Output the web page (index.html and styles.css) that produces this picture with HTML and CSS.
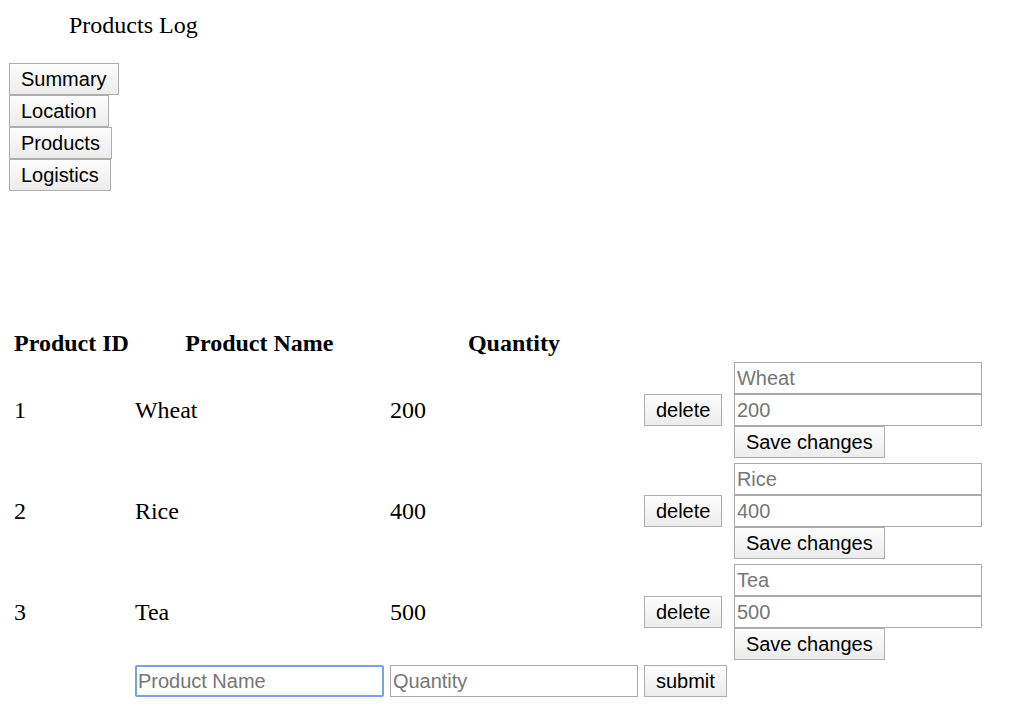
FILE: index.html
```html
<!DOCTYPE html>
<html>
<head>
<meta charset="utf-8">
<title>Products Log</title>
<link rel="stylesheet" href="styles.css">
</head>
<body>
<div class="title">Products Log</div>
<nav class="nav">
  <button class="btn">Summary</button>
  <button class="btn">Location</button>
  <button class="btn">Products</button>
  <button class="btn">Logistics</button>
</nav>
<table class="products">
  <thead>
    <tr>
      <th class="c-id">Product ID</th>
      <th class="c-name">Product Name</th>
      <th class="c-qty">Quantity</th>
      <th class="c-del"></th>
      <th class="c-edit"></th>
    </tr>
  </thead>
  <tbody>
    <tr>
      <td>1</td>
      <td>Wheat</td>
      <td>200</td>
      <td><button class="btn">delete</button></td>
      <td><div class="edit"><input class="field" placeholder="Wheat"><input class="field" placeholder="200"><button class="btn">Save changes</button></div></td>
    </tr>
    <tr>
      <td>2</td>
      <td>Rice</td>
      <td>400</td>
      <td><button class="btn">delete</button></td>
      <td><div class="edit"><input class="field" placeholder="Rice"><input class="field" placeholder="400"><button class="btn">Save changes</button></div></td>
    </tr>
    <tr>
      <td>3</td>
      <td>Tea</td>
      <td>500</td>
      <td><button class="btn">delete</button></td>
      <td><div class="edit"><input class="field" placeholder="Tea"><input class="field" placeholder="500"><button class="btn">Save changes</button></div></td>
    </tr>
    <tr>
      <td></td>
      <td><input class="field field-name focused" placeholder="Product Name"></td>
      <td><input class="field field-qty" placeholder="Quantity"></td>
      <td><button class="btn">submit</button></td>
      <td></td>
    </tr>
  </tbody>
</table>
</body>
</html>
```
FILE: styles.css
```css
html, body {
  background: #ffffff;
}
body {
  margin: 0;
  padding: 12px 9px 9px 9px;
  font-family: "Liberation Serif", "Times New Roman", serif;
  font-size: 24px;
  color: #000;
}
.title {
  padding-left: 60px;
  line-height: 27px;
  height: 27px;
}
.nav {
  display: flex;
  flex-direction: column;
  align-items: flex-start;
  margin-top: 24px;
}
.btn {
  box-sizing: border-box;
  height: 32px;
  margin: 0;
  padding: 0 11px;
  font-family: "Liberation Sans", Arial, sans-serif;
  font-size: 20px;
  line-height: 22px;
  color: #000;
  background: linear-gradient(#fdfdfd, #ececec);
  border: 1px solid #adadad;
  border-radius: 0;
  cursor: default;
  white-space: nowrap;
}
.products {
  margin-top: 135px;
  border-collapse: separate;
  border-spacing: 3px;
}
.products th,
.products td {
  padding: 1px 1.5px;
  vertical-align: middle;
  text-align: left;
  line-height: 27px;
  white-space: nowrap;
}
.products th {
  text-align: center;
  font-weight: bold;
}
.products tr > :first-child {
  padding-left: 2px;
}
.c-id { width: 113px; }
.c-name { width: 249px; }
.c-qty { width: 248px; }
.c-del { width: 84px; }
.c-edit { width: 248px; }
.edit {
  display: flex;
  flex-direction: column;
  align-items: flex-start;
}
.field {
  box-sizing: border-box;
  display: block;
  width: 248px;
  height: 32px;
  margin: 0;
  padding: 0 2px;
  font-family: "Liberation Sans", Arial, sans-serif;
  font-size: 20px;
  color: #000;
  background: #fff;
  border: 1px solid #a9a9a9;
  border-radius: 0;
  outline: none;
}
.field::placeholder {
  color: #767676;
  opacity: 1;
}
.field-name { width: 249px; }
.field-qty { width: 248px; }
.focused {
  border: 2px solid #7aa0e6;
  border-radius: 2px;
  padding: 0 1px;
}
```
